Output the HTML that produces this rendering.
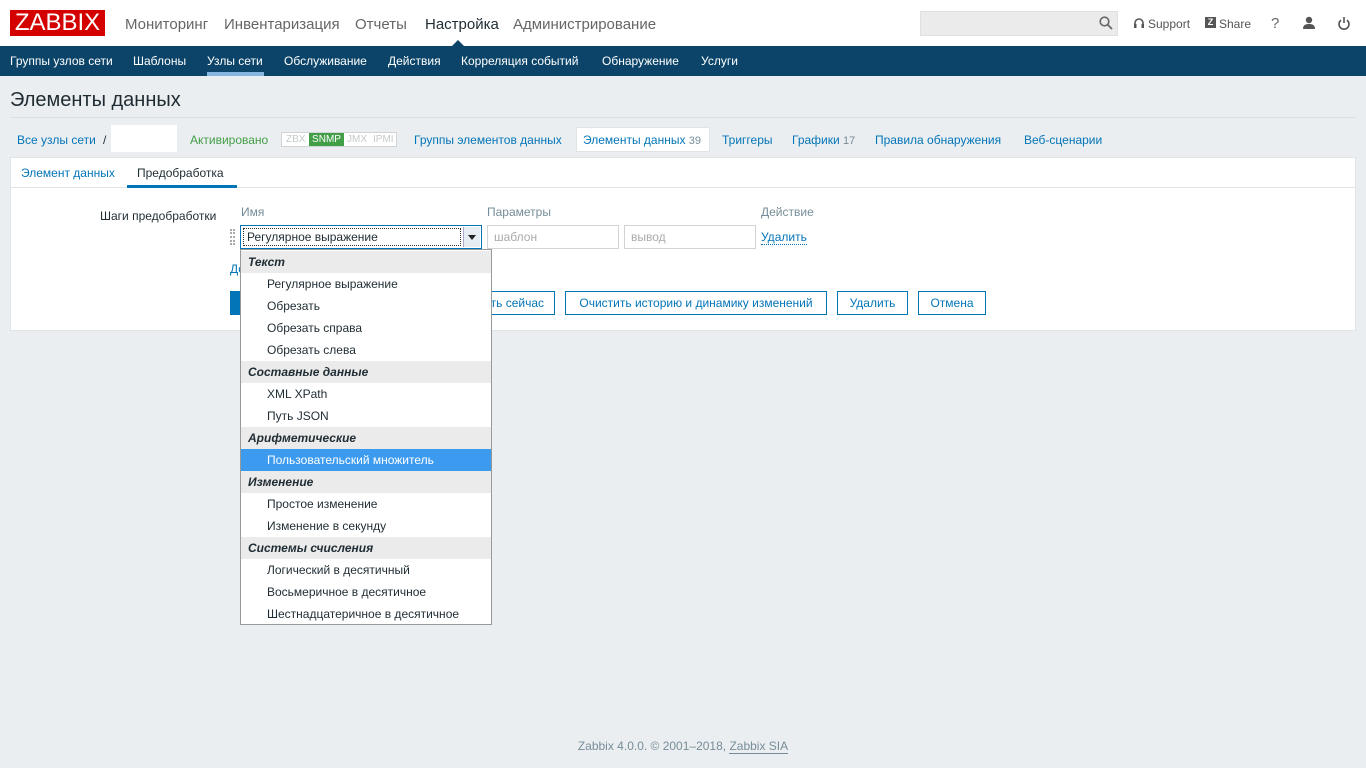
<!DOCTYPE html><html><head><meta charset="utf-8"><style>
*{box-sizing:border-box;margin:0;padding:0}
body{width:1366px;height:768px;background:#ebeef0;font-family:"Liberation Sans",sans-serif;font-size:12px;color:#1f2c33;position:relative;overflow:hidden}
.a{position:absolute}
a{color:#0275b8;text-decoration:none}
.top{left:0;top:0;width:1366px;height:46px;background:#fff}
.logo{left:10px;top:10px;width:95px;height:26px;background:#d40000;color:#fff;font-size:24px;line-height:26px;text-align:center}
.mm{top:16px;font-size:15px;color:#666}
.nav{left:0;top:46px;width:1366px;height:30px;background:#0b4468}
.nav span{position:absolute;top:8px;color:#fff;font-size:12px}
.dd .r{height:22px;line-height:22px;padding-left:26px;color:#1f2c33}
.dd .h{background:#ebebeb;font-weight:bold;font-style:italic;padding-left:7px}
.btn{position:absolute;top:291px;height:24px;border:1px solid #0275b8;background:#fff;color:#0275b8;line-height:22px;text-align:center}
</style></head><body>
<div class="a top"></div>
<div class="a logo">ZABBIX</div>
<span class="a mm" style="left:125px">Мониторинг</span>
<span class="a mm" style="left:224px">Инвентаризация</span>
<span class="a mm" style="left:355px">Отчеты</span>
<span class="a mm" style="left:425px;color:#1f2c33">Настройка</span>
<span class="a mm" style="left:513px">Администрирование</span>
<div class="a" style="left:452px;top:40px;width:0;height:0;border-left:6px solid transparent;border-right:6px solid transparent;border-bottom:6px solid #0b4468"></div>
<div class="a" style="left:920px;top:11px;width:198px;height:25px;background:#ebebeb;border:1px solid #e0e0e0"></div>
<svg class="a" style="left:1099px;top:16px" width="14" height="14"><circle cx="5.5" cy="5.5" r="4.3" fill="none" stroke="#666" stroke-width="1.6"/><line x1="8.5" y1="8.5" x2="13" y2="13" stroke="#666" stroke-width="1.8"/></svg>
<svg class="a" style="left:1133px;top:17px" width="12" height="12"><path d="M2 8V6a4 4 0 0 1 8 0v2" fill="none" stroke="#555" stroke-width="1.6"/><rect x="1" y="7" width="2.5" height="4" fill="#555"/><rect x="8.5" y="7" width="2.5" height="4" fill="#555"/></svg>
<span class="a" style="left:1148px;top:17px;color:#555;font-size:12px">Support</span>
<div class="a" style="left:1205px;top:17px;width:11px;height:11px;background:#555;color:#fff;font-size:9px;font-weight:bold;line-height:11px;text-align:center">Z</div>
<span class="a" style="left:1219px;top:17px;color:#555">Share</span>
<span class="a" style="left:1271px;top:15px;color:#666;font-size:15px">?</span>
<svg class="a" style="left:1302px;top:16px" width="14" height="14"><circle cx="7" cy="4" r="3.2" fill="#555"/><path d="M1 13c0-4 2.5-5 6-5s6 1 6 5z" fill="#555"/></svg>
<svg class="a" style="left:1337px;top:16px" width="14" height="14"><path d="M4 4.2a5 5 0 1 0 6 0" fill="none" stroke="#555" stroke-width="1.6"/><line x1="7" y1="1" x2="7" y2="7" stroke="#555" stroke-width="1.6"/></svg>
<div class="a nav"><span style="left:10px">Группы узлов сети</span><span style="left:133px">Шаблоны</span><span style="left:207px">Узлы сети</span><span style="left:284px">Обслуживание</span><span style="left:388px">Действия</span><span style="left:461px">Корреляция событий</span><span style="left:602px">Обнаружение</span><span style="left:701px">Услуги</span>
<div class="a" style="left:207px;top:26px;width:57px;height:4px;background:#86b5e1"></div></div>
<div class="a" style="left:10px;top:89px;font-size:20px;color:#1f2c33">Элементы данных</div>
<div class="a" style="left:10px;top:117px;width:1346px;height:1px;background:#dcdfe1"></div>
<a class="a" style="left:17px;top:133px">Все узлы сети</a><span class="a" style="left:103px;top:133px">/</span>
<div class="a" style="left:111px;top:125px;width:66px;height:27px;background:#fff"></div>
<span class="a" style="left:190px;top:133px;color:#429e47">Активировано</span>
<div class="a" style="left:281px;top:132px;width:116px;height:15px;border:1px solid #d0d4d6;font-size:10px;line-height:13px;color:#c4c8ca;background:#fff">
<span class="a" style="left:4px">ZBX</span><span class="a" style="left:27px;width:35px;height:13px;background:#429e47;color:#fff;text-align:center">SNMP</span><span class="a" style="left:65px">JMX</span><span class="a" style="left:91px">IPMI</span></div>
<a class="a" style="left:414px;top:133px">Группы элементов данных</a>
<div class="a" style="left:576px;top:127px;width:134px;height:25px;background:#fff;border:1px solid #dfe4e7"></div>
<a class="a" style="left:583px;top:133px">Элементы данных <span style="color:#768d99;font-size:11px">39</span></a>
<a class="a" style="left:722px;top:133px">Триггеры</a>
<a class="a" style="left:792px;top:133px">Графики <span style="color:#768d99;font-size:11px">17</span></a>
<a class="a" style="left:875px;top:133px">Правила обнаружения</a>
<a class="a" style="left:1024px;top:133px">Веб-сценарии</a>
<div class="a" style="left:10px;top:157px;width:1346px;height:174px;background:#fff;border:1px solid #dfe4e7"></div>
<div class="a" style="left:11px;top:187px;width:1344px;height:1px;background:#dfe4e7"></div>
<a class="a" style="left:21px;top:166px">Элемент данных</a>
<span class="a" style="left:137px;top:166px">Предобработка</span>
<div class="a" style="left:127px;top:185px;width:110px;height:3px;background:#0275b8"></div>
<span class="a" style="left:100px;top:209px">Шаги предобработки</span>
<span class="a" style="left:241px;top:205px;color:#768d99">Имя</span>
<span class="a" style="left:487px;top:205px;color:#768d99">Параметры</span>
<span class="a" style="left:761px;top:205px;color:#768d99">Действие</span>
<div class="a" style="left:230px;top:229px;width:5px;height:16px;border-left:2px dotted #aaa;border-right:2px dotted #aaa"></div>
<div class="a" style="left:240px;top:225px;width:242px;height:24px;border:1px solid #0275b8;background:#fff"><div style="margin:2px;height:18px;border:1px dotted #333;line-height:16px;padding-left:3px;width:218px">Регулярное выражение</div>
<div class="a" style="right:1px;top:1px;width:17px;height:20px;background:#e6eef4;border-left:1px solid #aac"><div style="margin:8px 4px;border-left:4px solid transparent;border-right:4px solid transparent;border-top:5px solid #222;width:0"></div></div></div>
<div class="a" style="left:487px;top:225px;width:132px;height:24px;border:1px solid #d0d4d6;color:#aaa;line-height:22px;padding-left:6px">шаблон</div>
<div class="a" style="left:624px;top:225px;width:132px;height:24px;border:1px solid #d0d4d6;color:#aaa;line-height:22px;padding-left:6px">вывод</div>
<a class="a" style="left:761px;top:230px;border-bottom:1px dotted #0275b8">Удалить</a>
<a class="a" style="left:230px;top:262px">До</a>
<div class="btn" style="left:230px;width:20px;background:#0275b8"></div>
<div class="btn" style="left:470px;width:85px;border-left:none;text-align:right;padding-right:10px">ть сейчас</div>
<div class="btn" style="left:565px;width:262px">Очистить историю и динамику изменений</div>
<div class="btn" style="left:837px;width:71px">Удалить</div>
<div class="btn" style="left:918px;width:68px">Отмена</div>
<div class="a dd" style="left:240px;top:249px;width:252px;height:376px;background:#fff;border:1px solid #999;padding-top:1px">
<div class="r h">Текст</div><div class="r">Регулярное выражение</div><div class="r">Обрезать</div><div class="r">Обрезать справа</div><div class="r">Обрезать слева</div>
<div class="r h">Составные данные</div><div class="r">XML XPath</div><div class="r">Путь JSON</div>
<div class="r h">Арифметические</div><div class="r" style="background:#3d9bef;color:#fff">Пользовательский множитель</div>
<div class="r h">Изменение</div><div class="r">Простое изменение</div><div class="r">Изменение в секунду</div>
<div class="r h">Системы счисления</div><div class="r">Логический в десятичный</div><div class="r">Восьмеричное в десятичное</div><div class="r">Шестнадцатеричное в десятичное</div>
</div>
<div class="a" style="left:0;top:739px;width:1366px;text-align:center;color:#768d99">Zabbix 4.0.0. © 2001–2018, <span style="border-bottom:1px solid #768d99">Zabbix SIA</span></div>
</body></html>
